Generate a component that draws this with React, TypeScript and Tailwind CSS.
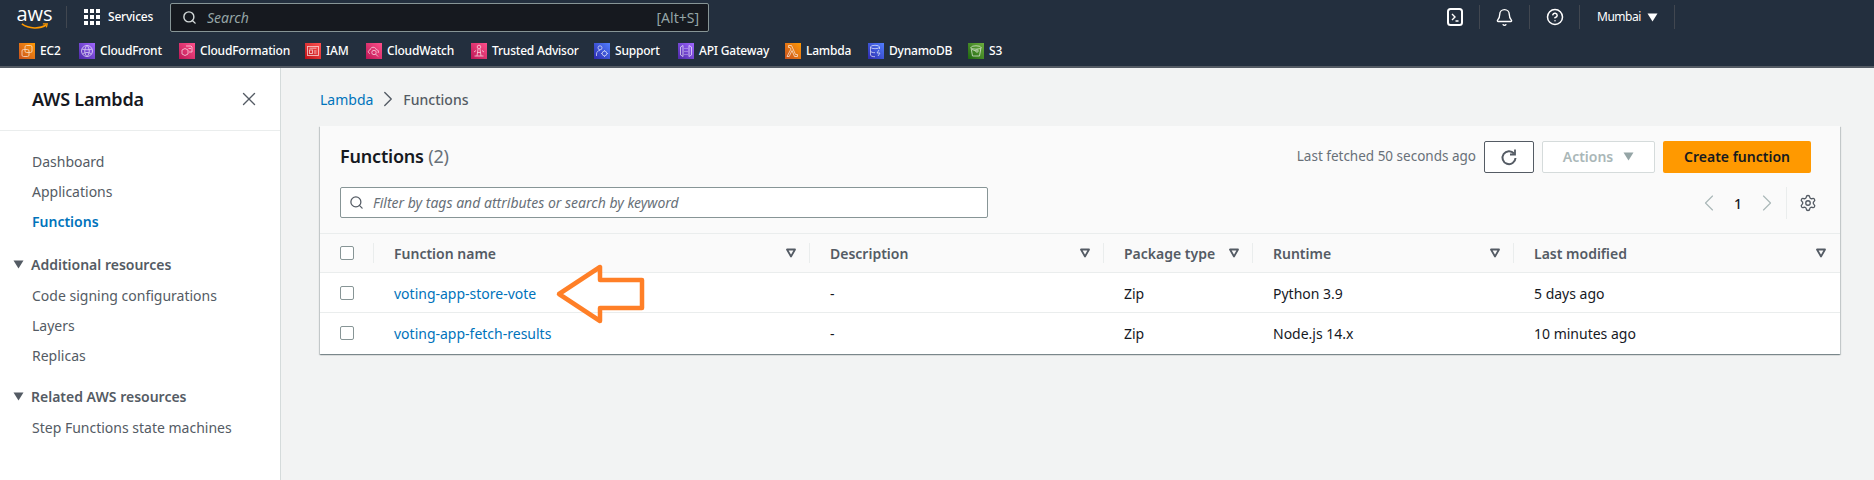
import React from "react";
import { Bell, CircleHelp, Settings, X, ChevronLeft, ChevronRight, Search } from "lucide-react";

const icons: Record<string, React.ReactNode> = {
  EC2: (<><rect x="6" y="2.5" width="7" height="7" rx="1.5" /><rect x="3" y="6.5" width="7" height="7" rx="1.5" /></>),
  CloudFront: (<><circle cx="8" cy="8" r="5.5" /><path d="M3 6c3 1 7 1 10 0M3.5 11c3-2 6-2 9 0M8 2.5c-3 3-3 8 0 11M8 2.5c3 3 3 8 0 11" /></>),
  CloudFormation: (<><path d="M3 7l3-1.5L9 7v4l-3 1.5L3 11z" /><path d="M7 3h5l1 1v5h-3" /><path d="M9.5 5.5H12" /></>),
  IAM: (<><rect x="2.5" y="3.5" width="11" height="9" /><rect x="4.5" y="7" width="3" height="3.5" /><path d="M4.5 5.2h7M9 8h2.5M9 10h2.5" /></>),
  CloudWatch: (<><path d="M4 10.5c-2-.2-2.5-3 0-3.5.3-2 2.5-3.5 4.5-2.5 1 .4 1.5 1.2 1.7 2 2.3.2 2.8 2.5 1.8 3.5" /><circle cx="8" cy="9.5" r="2.2" /><path d="M9.5 11l2.5 2.5" /></>),
  "Trusted Advisor": (<><circle cx="8" cy="4" r="1.8" /><path d="M7 6l-1 7M9 6l1 7M6 9.5h4M3 9l2-1.5M13 9l-2-1.5M3.5 13h9" /></>),
  Support: (<><circle cx="6" cy="4.8" r="2" /><path d="M2.5 13v-2c0-2 1.5-3.5 3.5-3.5" /><circle cx="10.5" cy="10.5" r="2.3" /><path d="M10.5 7v1M10.5 13v1M7 10.5h1M13 10.5h1" /></>),
  "API Gateway": (<><path d="M5 2.5L2.5 4v8L5 13.5zM11 2.5L13.5 4v8L11 13.5z" /><path d="M7 5v1M7 8v1M7 11v1M9 5v1M9 8v1M9 11v1" /></>),
  Lambda: (<path d="M3.5 2.5h3l4 9h2v2h-3l-2.5-6-2.8 6H2L6 6 5 4.5H3.5z" />),
  DynamoDB: (<><ellipse cx="7" cy="4" rx="4.5" ry="1.7" /><path d="M2.5 4v8c0 1 2 1.7 4.5 1.7M2.5 8c0 1 2 1.7 4.5 1.7M11.5 4v2" /><path d="M11 7l-2 3h3l-2 3" /></>),
  S3: (<><path d="M3 4.5l1.5 8.5h7L13 4.5" /><ellipse cx="8" cy="4.5" rx="5" ry="1.7" /><circle cx="9" cy="8" r="1.2" /><path d="M8 8L4 6.5" /></>),
};

const services = [
  { name: "EC2", w: 60, c: "from-[#c8511b] to-[#ff9900]" },
  { name: "CloudFront", w: 100, c: "from-[#4d27a8] to-[#a166ff]" },
  { name: "CloudFormation", w: 126, c: "from-[#bc1356] to-[#ff4f8b]" },
  { name: "IAM", w: 61, c: "from-[#bd0816] to-[#ff5252]" },
  { name: "CloudWatch", w: 105, c: "from-[#bc1356] to-[#ff4f8b]" },
  { name: "Trusted Advisor", w: 123, c: "from-[#bc1356] to-[#ff4f8b]" },
  { name: "Support", w: 84, c: "from-[#2e27ad] to-[#527fff]" },
  { name: "API Gateway", w: 107, c: "from-[#4d27a8] to-[#a166ff]" },
  { name: "Lambda", w: 83, c: "from-[#c8511b] to-[#ff9900]" },
  { name: "DynamoDB", w: 100, c: "from-[#2e27ad] to-[#527fff]" },
  { name: "S3", w: 40, c: "from-[#1b660f] to-[#6cae3e]" },
];

const cols = ["Function name", "Description", "Package type", "Runtime", "Last modified"];

const rows = [
  ["voting-app-store-vote", "-", "Zip", "Python 3.9", "5 days ago"],
  ["voting-app-fetch-results", "-", "Zip", "Node.js 14.x", "10 minutes ago"],
];

const gridCols = "grid grid-cols-[54px_436px_294px_149px_261px_1fr]";

function Caret({ className }: { className?: string }) {
  return (
    <svg width="11" height="9" viewBox="0 0 11 9" className={className}>
      <path d="M0.5 0.5h10L5.5 8.5z" fill="currentColor" />
    </svg>
  );
}

function FilterIcon() {
  return (
    <svg width="10" height="10" viewBox="0 0 10 10" className="text-[#545b64]">
      <path d="M1 1.5h8L5 8.5z" fill="none" stroke="currentColor" strokeWidth="1.8" strokeLinejoin="round" />
    </svg>
  );
}

function Checkbox() {
  return <span className="block w-[14px] h-[14px] rounded-[2px] border border-[#879596] bg-white" />;
}

function NavItem({ children, active }: { children: React.ReactNode; active?: boolean }) {
  return (
    <div className={`h-[30px] flex items-center pl-[32px] text-[14px] ${active ? "font-semibold text-[#0073bb]" : "text-[#545b64]"}`}>
      {children}
    </div>
  );
}

function NavSection({ children }: { children: React.ReactNode }) {
  return (
    <div className="h-[31px] flex items-center pl-[13px] gap-[7px] text-[14px] font-semibold text-[#545b64]">
      <Caret />
      {children}
    </div>
  );
}

export default function App() {
  return (
    <div className="w-[1874px] h-[480px] overflow-hidden flex flex-col bg-[#f2f3f3] font-['Noto_Sans','Open_Sans',sans-serif] relative">
      <header className="h-[68px] shrink-0 bg-[#232f3e] border-b-2 border-[#545b64] text-white">
        <div className="h-[34px] flex items-center">
          <div className="w-[66px] pl-[18px] flex flex-col items-center pr-[15px] h-[26px] relative">
            <span className="text-[20px] leading-[20px] font-['Open_Sans',sans-serif] text-white">aws</span>
            <svg width="32" height="8" viewBox="0 0 32 8" className="-mt-[1px]">
              <path d="M1 1c8 6 21 6 28 1" fill="none" stroke="#ff9900" strokeWidth="1.8" />
              <path d="M25 1l5 0-1 4" fill="none" stroke="#ff9900" strokeWidth="1.4" />
            </svg>
          </div>
          <div className="w-px h-[22px] bg-[#414750]" />
          <svg width="16" height="16" viewBox="0 0 16 16" className="ml-[17px] fill-white">
            <rect x="0" y="0" width="4" height="4" /><rect x="6" y="0" width="4" height="4" /><rect x="12" y="0" width="4" height="4" />
            <rect x="0" y="6" width="4" height="4" /><rect x="6" y="6" width="4" height="4" /><rect x="12" y="6" width="4" height="4" />
            <rect x="0" y="12" width="4" height="4" /><rect x="6" y="12" width="4" height="4" /><rect x="12" y="12" width="4" height="4" />
          </svg>
          <span className="ml-[8px] w-[62px] text-[12px] font-medium tracking-[-0.2px] whitespace-nowrap">Services</span>
          <div className="w-[539px] h-[29px] bg-[#16191f] border border-[#879596] rounded-[2px] flex items-center pl-[11px] pr-[9px]">
            <Search size={15} strokeWidth={2.25} className="text-[#d5dbdb]" />
            <span className="ml-[10px] text-[14px] italic text-[#95a5a6]">Search</span>
            <span className="ml-auto text-[14px] text-[#95a5a6]">[Alt+S]</span>
          </div>
          <div className="ml-[728px] flex items-center h-[24px]">
            <div className="w-[36px] flex justify-center">
              <svg width="16" height="18" viewBox="0 0 16 18" fill="none" stroke="white">
                <rect x="1" y="1" width="14" height="16" rx="2.5" strokeWidth="2" />
                <path d="M5 6l3 3-3 3M8.5 13h3" strokeWidth="1.4" />
              </svg>
            </div>
            <div className="w-px h-[24px] bg-[#414750] ml-[6px]" />
            <div className="w-[49px] flex justify-center"><Bell size={19} strokeWidth={1.75} /></div>
            <div className="w-px h-[24px] bg-[#414750]" />
            <div className="w-[49px] flex justify-center"><CircleHelp size={18} strokeWidth={2} /></div>
            <div className="w-px h-[24px] bg-[#414750]" />
            <div className="w-[94px] pl-[17px] flex items-center gap-[6px]">
              <span className="text-[12px] tracking-[-0.5px]">Mumbai</span>
              <Caret />
            </div>
            <div className="w-px h-[24px] bg-[#414750]" />
          </div>
        </div>
        <div className="h-[32px] pt-[2px] pl-[19px] flex items-center">
          {services.map(({ name, w, c }) => (
            <div key={name} className="flex items-center gap-[5px] shrink-0" style={{ width: w }}>
              <span className={`w-[16px] h-[16px] flex items-center justify-center bg-linear-to-tr ${c}`}>
                <svg width="16" height="16" viewBox="0 0 16 16" fill="none" stroke="white" strokeWidth="0.9" className="opacity-70">
                  {icons[name]}
                </svg>
              </span>
              <span className="text-[12px] font-medium tracking-[-0.2px] whitespace-nowrap">{name}</span>
            </div>
          ))}
        </div>
      </header>

      <div className="flex flex-1 min-h-0">
        <aside className="w-[281px] shrink-0 bg-white border-r border-[#d5dbdb]">
          <div className="h-[63px] border-b border-[#eaeded] flex items-center justify-between pl-[32px] pr-[20px]">
            <span className="text-[18px] font-semibold tracking-[-0.2px] text-[#16191f]">AWS Lambda</span>
            <X size={22} strokeWidth={1.5} className="text-[#545b64]" />
          </div>
          <div className="pt-[15px]">
            <NavItem>Dashboard</NavItem>
            <NavItem>Applications</NavItem>
            <NavItem active>Functions</NavItem>
            <div className="mt-[13px]"><NavSection>Additional resources</NavSection></div>
            <NavItem>Code signing configurations</NavItem>
            <NavItem>Layers</NavItem>
            <NavItem>Replicas</NavItem>
            <div className="mt-[11px]"><NavSection>Related AWS resources</NavSection></div>
            <NavItem>Step Functions state machines</NavItem>
          </div>
        </aside>

        <main className="flex-1 min-w-0 pl-[39px] pr-[34px]">
          <nav className="h-[58px] pt-[4px] flex items-center text-[14px] gap-[5px]">
            <span className="text-[#0073bb]">Lambda</span>
            <ChevronRight size={26} strokeWidth={1.25} className="text-[#545b64] -mx-[3px]" />
            <span className="text-[#545b64] font-medium">Functions</span>
          </nav>

          <section className="w-[1520px] h-[228px] bg-white shadow-[0_1px_1px_0_rgba(0,28,36,0.3),1px_1px_1px_0_rgba(0,28,36,0.15),-1px_1px_1px_0_rgba(0,28,36,0.15)]">
            <div className="h-[108px] bg-[#fafafa] border-b border-[#eaeded] pl-[20px] pr-[29px] relative">
              <div className="h-[61px] flex items-center">
                <h1 className="text-[18px] font-semibold tracking-[-0.2px] text-[#16191f]">
                  Functions <span className="font-normal text-[#687078]">(2)</span>
                </h1>
                <span className="ml-auto text-[13.5px] text-[#687078] mr-[8px]">Last fetched 50 seconds ago</span>
                <button className="w-[50px] h-[32px] rounded-[2px] border border-[#545b64] bg-white flex items-center justify-center mr-[8px]">
                  <svg width="18" height="18" viewBox="0 0 18 18" fill="none" stroke="#545b64" strokeWidth="2">
                    <path d="M14 5.5A6.5 6.5 0 1 0 15.5 10" />
                    <path d="M15 1.5v5h-5" strokeWidth="1.8" />
                  </svg>
                </button>
                <button className="w-[113px] h-[32px] rounded-[2px] border border-[#d5dbdb] bg-white text-[#aab7b8] text-[14px] font-semibold flex items-center justify-center gap-[10px] mr-[8px]">
                  Actions <Caret className="text-[#95a5a6]" />
                </button>
                <button className="w-[148px] h-[32px] rounded-[2px] bg-[#ff9900] text-[#16191f] text-[14px] font-semibold">Create function</button>
              </div>
              <div className="h-[32px] flex items-center">
                <div className="w-[648px] h-[31px] -mt-[1px] bg-white border border-[#879596] rounded-[2px] flex items-center pl-[8px]">
                  <Search size={15} strokeWidth={2} className="text-[#545b64]" />
                  <span className="ml-[9px] text-[14px] italic text-[#687078]">Filter by tags and attributes or search by keyword</span>
                </div>
                <div className="ml-auto flex items-center h-[32px] -mr-[6px]">
                  <ChevronLeft size={28} strokeWidth={1} className="text-[#aab7b8] -mx-[3px]" />
                  <span className="w-[36px] text-center text-[14px] font-medium text-[#16191f]">1</span>
                  <ChevronRight size={28} strokeWidth={1} className="text-[#aab7b8] -mx-[3px]" />
                  <div className="w-px h-[32px] bg-[#eaeded] ml-[8px]" />
                  <Settings size={18} strokeWidth={1.75} className="text-[#545b64] ml-[12px]" />
                </div>
              </div>
            </div>

            <div className={`${gridCols} h-[39px] bg-[#fafafa] border-b border-[#eaeded] items-center`}>
              <div className="pl-[20px] h-[20px] flex items-center relative">
                <Checkbox />
                <span className="absolute right-0 top-0 w-px h-[20px] bg-[#eaeded]" />
              </div>
              {cols.map((c, i) => (
                <div key={c} className="h-[20px] pl-[20px] pr-[14px] flex items-center justify-between relative">
                  <span className="text-[14px] font-semibold text-[#545b64] whitespace-nowrap">{c}</span>
                  <FilterIcon />
                  {i < cols.length - 1 && <span className="absolute right-0 top-0 w-px h-[20px] bg-[#eaeded]" />}
                </div>
              ))}
            </div>

            {rows.map((r, ri) => (
              <div key={r[0]} className={`${gridCols} h-[40px] items-center ${ri === 0 ? "border-b border-[#eaeded]" : ""}`}>
                <div className="pl-[20px]"><Checkbox /></div>
                {r.map((v, i) => (
                  <div key={i} className={`pl-[20px] pt-[1px] text-[14px] whitespace-nowrap ${i === 0 ? "text-[#0073bb]" : "text-[#16191f]"}`}>{v}</div>
                ))}
              </div>
            ))}
          </section>
        </main>
      </div>

      <svg width="100" height="70" viewBox="0 0 100 70" className="absolute left-[550px] top-[260px]" fill="none">
        <path d="M9 34L50 7V20H92V48H50V61Z" stroke="#ff7f27" strokeWidth="4.5" strokeLinejoin="round" />
      </svg>
    </div>
  );
}
